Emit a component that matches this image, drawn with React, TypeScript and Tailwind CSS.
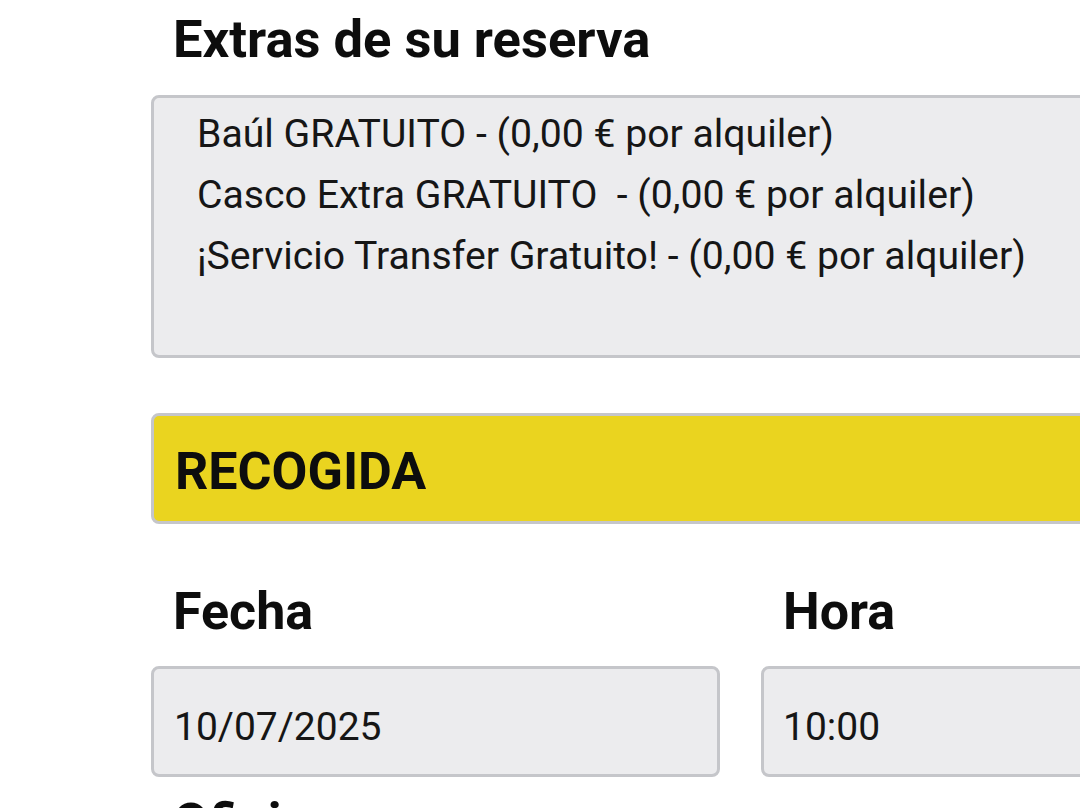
import React from "react";

export default function App() {
  return (
    <div className="w-[1080px] h-[808px] overflow-hidden bg-white text-[#0d0d0d]" style={{ fontFamily: "Roboto, 'Noto Sans', sans-serif" }}>
      <div className="ml-[151px] w-[1179px] flex flex-col">
        <h1 className="pt-[9px] px-[22px] text-[52.5px] leading-[60px] font-bold">Extras de su reserva</h1>
        <div className="mt-[26px] h-[263px] border-[3px] border-[#c5c6ca] rounded-[8px] bg-[#ececee] pl-[43px] pt-[6px] text-[39.2px] leading-[61px] text-[#161616] whitespace-pre">
          <div>Baúl GRATUITO - (0,00 € por alquiler)</div>
          <div>Casco Extra GRATUITO  - (0,00 € por alquiler)</div>
          <div>¡Servicio Transfer Gratuito! - (0,00 € por alquiler)</div>
        </div>
        <div className="mt-[55px] h-[111px] border-[3px] border-[#c5c6ca] rounded-[8px] bg-[#ead41f] flex items-center px-[21px] pt-[6px]">
          <span className="text-[52px] leading-none font-bold">RECOGIDA</span>
        </div>
        <div className="mt-[62px] grid grid-cols-2 gap-x-[41px]">
          <div className="flex flex-col">
            <span className="px-[22px] text-[52px] leading-none font-bold">Fecha</span>
            <div className="mt-[28px] h-[111px] border-[3px] border-[#c5c6ca] rounded-[8px] bg-[#ececee] flex items-center px-[20px] pt-[12px]">
              <span className="text-[39px] leading-none text-[#161616]">10/07/2025</span>
            </div>
          </div>
          <div className="flex flex-col">
            <span className="px-[22px] text-[52px] leading-none font-bold">Hora</span>
            <div className="mt-[28px] h-[111px] border-[3px] border-[#c5c6ca] rounded-[8px] bg-[#ececee] flex items-center px-[19px] pt-[12px]">
              <span className="text-[39px] leading-none text-[#161616]">10:00</span>
            </div>
          </div>
        </div>
        <span className="mt-[20px] px-[22px] text-[52px] leading-none font-bold">Oficina</span>
      </div>
    </div>
  );
}
